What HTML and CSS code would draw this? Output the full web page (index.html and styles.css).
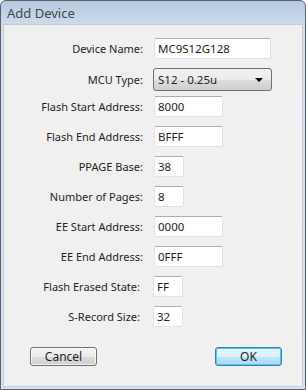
FILE: index.html
```html
<!DOCTYPE html>
<html lang="en">
<head>
  <meta charset="UTF-8" />
  <meta name="viewport" content="width=device-width, initial-scale=1" />
  <title>Add Device</title>
  <link rel="stylesheet" href="styles.css">
</head>
<body>

  <div class="window">
    <div class="titlebar">Add Device</div>

    <div class="dialog">
      <form class="fields">
        <div class="row">
          <label>Device Name:</label>
          <input class="box wide" type="text" value="MC9S12G128">
        </div>
        <div class="row row-select">
          <label>MCU Type:</label>
          <div class="select">
            <span>S12 - 0.25u</span>
            <span class="arrow"></span>
          </div>
        </div>
        <div class="row">
          <label>Flash Start Address:</label>
          <input class="box mid" type="text" value="8000">
        </div>
        <div class="row">
          <label>Flash End Address:</label>
          <input class="box mid" type="text" value="BFFF">
        </div>
        <div class="row">
          <label>PPAGE Base:</label>
          <input class="box small" type="text" value="38">
        </div>
        <div class="row">
          <label>Number of Pages:</label>
          <input class="box small" type="text" value="8">
        </div>
        <div class="row">
          <label>EE Start Address:</label>
          <input class="box mid" type="text" value="0000">
        </div>
        <div class="row">
          <label>EE End Address:</label>
          <input class="box mid" type="text" value="0FFF">
        </div>
        <div class="row shift">
          <label>Flash Erased State:</label>
          <input class="box small" type="text" value="FF">
        </div>
        <div class="row shift">
          <label>S-Record Size:</label>
          <input class="box small" type="text" value="32">
        </div>
      </form>

      <div class="buttons">
        <button type="button" class="btn">Cancel</button>
        <button type="button" class="btn btn-default">OK</button>
      </div>
    </div>
  </div>

</body>
</html>
```

FILE: styles.css
```css
html, body {
  margin: 0;
  padding: 0;
}

body {
  font-family: "Noto Sans", "Open Sans", sans-serif;
  font-size: 11px;
  color: #1e1e1e;
  background-color: #ffffff;
}

.window {
  width: 306px;
  height: 390px;
  box-sizing: border-box;
  border: 1px solid #5b5f66;
  border-radius: 6px 6px 0 0;
  background: linear-gradient(#b6c9df, #d3e1f0 30px, #d6e3f1);
  display: flex;
  flex-direction: column;
  overflow: hidden;
}

.titlebar {
  height: 23px;
  padding-left: 6px;
  font-size: 13px;
  line-height: 25px;
  color: #454545;
}

.dialog {
  flex: 1;
  margin: 0 2px 2px 2px;
  border: 1px solid #c3cbd6;
  background-color: #f0f0f0;
  padding-top: 13px;
}

.fields {
  margin: 0;
}

.row {
  display: flex;
  align-items: center;
  height: 21px;
  margin-bottom: 9px;
}

.row label {
  width: 139px;
  text-align: right;
  margin-right: 11px;
  white-space: nowrap;
}

.row.shift label {
  width: 136px;
  margin-right: 13px;
}

.row-select {
  height: 23px;
  margin-bottom: 5px;
}

.box {
  height: 21px;
  box-sizing: border-box;
  border: 1px solid #e2e3ea;
  border-top-color: #abadb3;
  border-radius: 2px;
  background: #ffffff;
  font-family: inherit;
  font-size: 11.5px;
  color: #1e1e1e;
  padding: 0 3px;
  margin: 0;
  outline: none;
}

.wide {
  width: 117px;
}

.mid {
  width: 69px;
}

.small {
  width: 30px;
}

.select {
  width: 119px;
  height: 23px;
  box-sizing: border-box;
  margin-left: -1px;
  border: 1px solid #707070;
  border-radius: 3px;
  background: linear-gradient(#f2f2f2, #ebebeb 50%, #dddddd 50%, #cfcfcf);
  display: flex;
  align-items: center;
  justify-content: space-between;
  padding: 0 8px 0 4px;
  font-size: 11.5px;
}

.arrow {
  width: 0;
  height: 0;
  border-left: 4px solid transparent;
  border-right: 4px solid transparent;
  border-top: 4px solid #000000;
}

.buttons {
  display: flex;
  justify-content: space-between;
  padding: 11px 20px 0 26px;
}

.btn {
  width: 67px;
  height: 19px;
  box-sizing: border-box;
  border: 1px solid #707070;
  border-radius: 3px;
  background: linear-gradient(#f2f2f2, #ebebeb 50%, #dddddd 50%, #cfcfcf);
  box-shadow: inset 0 0 0 1px rgba(255, 255, 255, 0.7);
  font-family: inherit;
  font-size: 12px;
  color: #1e1e1e;
  padding: 0;
  line-height: 15px;
}

.btn-default {
  border-color: #3c7fb1;
  background: linear-gradient(#eaf6fd, #d9f0fc 50%, #bee6fd 50%, #a7d9f5);
  box-shadow: inset 0 0 0 1px #48c9fa;
}
```
